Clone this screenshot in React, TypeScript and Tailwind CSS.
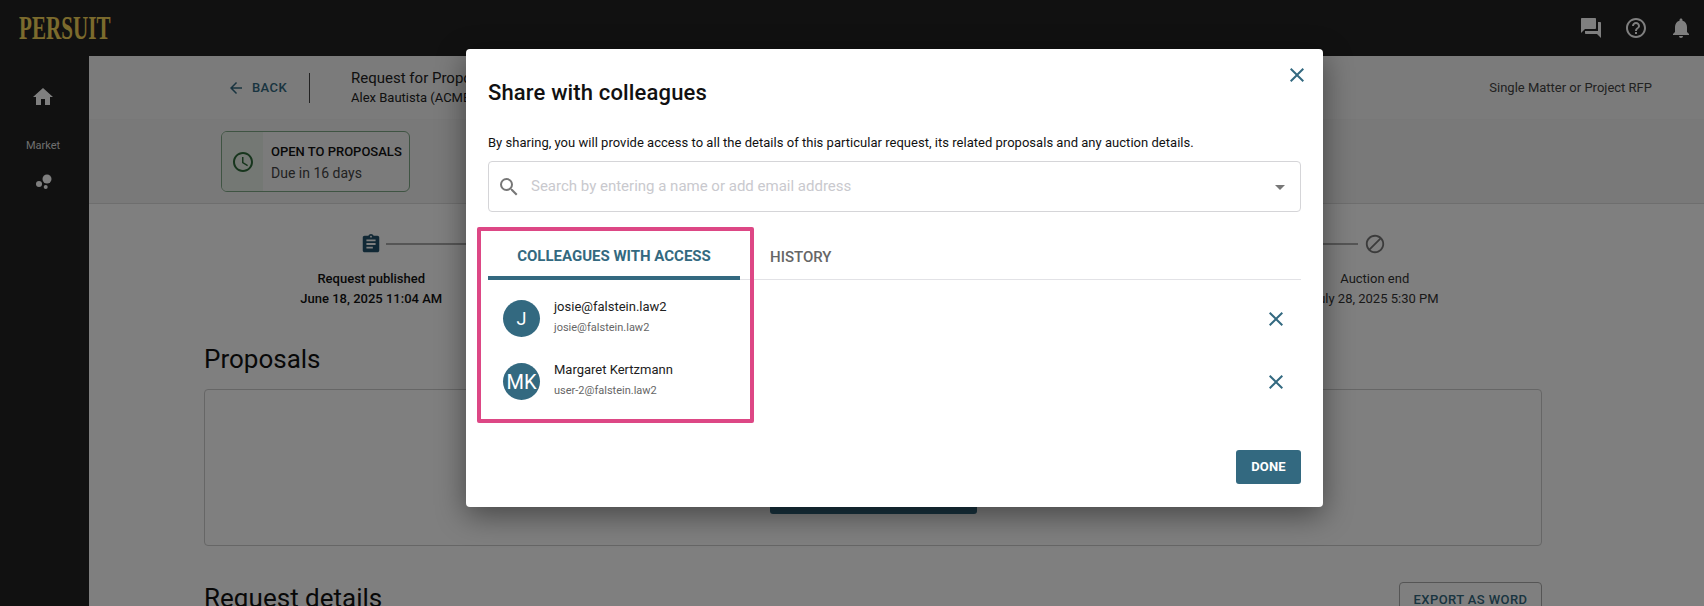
import React from "react";
import { MdHome, MdQuestionAnswer, MdHelpOutline, MdNotifications, MdArrowBack, MdAccessTime, MdAssignment, MdBlock, MdClose, MdSearch, MdArrowDropDown } from "react-icons/md";

const font = { fontFamily: "Roboto, 'Liberation Sans', sans-serif" };

function Person({ initials, name, email, big }: { initials: string; name: string; email: string; big?: boolean }) {
  return (
    <div className="flex h-[63px] items-center pl-[15px] pr-[13px]">
      <div className={`flex h-[37px] w-[37px] items-center justify-center rounded-full bg-[#336980] text-white ${big ? "text-[20px]" : "text-[18px]"}`}>{initials}</div>
      <div className="-mt-[2px] ml-[14px] flex-1">
        <div className="text-[13px] leading-[20px] text-[#212121]">{name}</div>
        <div className="mt-[1px] text-[11px] leading-[20px] text-[#666]">{email}</div>
      </div>
      <MdClose className="text-[#336980]" size={24} />
    </div>
  );
}

export default function App() {
  return (
    <div className="relative h-[606px] w-[1704px] overflow-hidden bg-white" style={font}>
      <header className="flex h-[56px] items-center justify-between bg-[#222] pl-[19px] pr-[11px]">
        <div className="origin-left scale-x-[0.64] text-[33px] font-bold leading-none text-[#f7d65a]" style={{ fontFamily: "'Liberation Serif', serif" }}>PERSUIT</div>
        <div className="flex items-center gap-[21px] text-[#fff]">
          <MdQuestionAnswer size={24} />
          <MdHelpOutline size={24} />
          <MdNotifications size={24} />
        </div>
      </header>
      <div className="flex h-[550px]">
        <aside className="flex w-[89px] shrink-0 flex-col items-center bg-[#222] pr-[3px] text-white">
          <MdHome size={24} className="mt-[29px]" />
          <div className="mt-[29px] text-[11px] leading-[16px] text-[#ddd]">Market</div>
          <svg className="mt-[16px]" width="24" height="24" viewBox="0 0 24 24" fill="#fff">
            <circle cx="16" cy="9" r="4.5" />
            <circle cx="8" cy="14" r="3" />
            <circle cx="14.7" cy="17" r="2" />
          </svg>
        </aside>
        <main className="min-w-0 flex-1">
          <div className="flex h-[64px] items-center border-b border-[#f0f0f0] bg-[#f6f6f6] pl-[138px] pr-[52px]">
            <MdArrowBack size={18} className="text-[#336980]" />
            <span className="ml-[7px] text-[13px] font-medium tracking-[0.4px] text-[#336980]">BACK</span>
            <div className="ml-[22px] h-[30px] w-px bg-[#444]" />
            <div className="ml-[41px]">
              <div className="text-[15px] leading-[20px] text-[#222]">Request for Proposal</div>
              <div className="text-[13px] leading-[20px] text-[#222]">Alex Bautista (ACME)</div>
            </div>
            <div className="ml-auto text-[13px] text-[#444]">Single Matter or Project RFP</div>
          </div>
          <div className="flex h-[84px] items-center border-b border-[#ddd] bg-[#f2f2f2] pl-[132px]">
            <div className="flex h-[61px] w-[189px] overflow-hidden rounded-[6px] border border-[#7fa886] bg-[#f7f7f7]">
              <div className="flex w-[41px] items-center justify-center bg-[#e8f1e8]">
                <MdAccessTime size={24} className="text-[#2f6b3a]" />
              </div>
              <div className="pl-[8px] pt-[10px]">
                <div className="text-[13px] font-medium leading-[20px] text-[#111]">OPEN TO PROPOSALS</div>
                <div className="mt-[1px] text-[14px] leading-[20px] text-[#444]">Due in 16 days</div>
              </div>
            </div>
          </div>
          <div className="pl-[115px] pr-[162px] pt-[29px]">
            <div className="flex items-center px-[167px]">
              <MdAssignment size={22} className="-ml-[11px] text-[#23516a]" />
              <div className="ml-[4px] mr-[6px] h-[2px] flex-1 bg-[#aaa]" />
              <MdBlock size={22} className="-mr-[11px] text-[#777]" />
            </div>
            <div className="mt-[14px] grid grid-cols-4 text-center text-[13px] leading-[20px]">
              <div className="font-medium text-[#111]">Request published<br />June 18, 2025 11:04 AM</div>
              <div />
              <div />
              <div className="text-[#333]">Auction end<br />July 28, 2025 5:30 PM</div>
            </div>
            <h2 className="mt-[34px] text-[26px] leading-[32px] text-[#111]">Proposals</h2>
            <div className="mt-[14px] flex h-[157px] items-end justify-center rounded-[4px] border border-[#ccc] pb-[31px]">
              <div className="h-[40px] w-[207px] rounded-[3px] bg-[#336980]" />
            </div>
            <div className="mt-[36px] flex items-start justify-between">
              <h2 className="text-[26px] leading-[32px] text-[#111]">Request details</h2>
              <div className="flex h-[36px] w-[143px] items-center justify-center rounded-[4px] border border-[#aaa] text-[13px] font-medium tracking-[0.4px] text-[#336980]">EXPORT AS WORD</div>
            </div>
          </div>
        </main>
      </div>

      <div className="absolute inset-0 bg-black/50" />

      <div className="absolute left-[466px] top-[49px] h-[458px] w-[857px] rounded-[4px] bg-white px-[22px] shadow-[0_8px_30px_rgba(0,0,0,0.45)]">
        <div className="flex h-[89px] items-start justify-between">
          <h1 className="mt-[30px] text-[22px] font-medium leading-[28px] tracking-[0.15px] text-[#111]">Share with colleagues</h1>
          <MdClose size={24} className="-mr-[8px] mt-[14px] text-[#336980]" />
        </div>
        <p className="text-[13px] leading-[10px] tracking-[0.025px] text-[#111]">By sharing, you will provide access to all the details of this particular request, its related proposals and any auction details.</p>
        <div className="mt-[13px] flex h-[51px] items-center rounded-[4px] border border-[#d5d5d8] pl-[8px] pr-[8px]">
          <MdSearch size={24} className="text-[#777]" />
          <span className="ml-[10px] flex-1 text-[15px] text-[#c9c9ce]">Search by entering a name or add email address</span>
          <MdArrowDropDown size={24} className="text-[#777]" />
        </div>
        <div className="mt-[18px] flex h-[50px] border-b border-[#e2e2e6]">
          <div className="-mb-px flex w-[252px] items-center justify-center border-b-[4px] border-[#336980] pt-[7px] text-[15px] font-bold text-[#336980]">COLLEAGUES WITH ACCESS</div>
          <div className="flex items-center pl-[30px] pt-[6px] text-[15px] font-medium text-[#666]">HISTORY</div>
        </div>
        <div className="pt-[7px]">
          <Person initials="J" name="josie@falstein.law2" email="josie@falstein.law2" />
          <Person initials="MK" name="Margaret Kertzmann" email="user-2@falstein.law2" big />
        </div>
        <div className="mt-[37px] flex justify-end">
          <div className="flex h-[34px] w-[65px] items-center justify-center rounded-[3px] bg-[#336980] text-[13px] font-bold tracking-[0.2px] text-white">DONE</div>
        </div>
      </div>

      <div className="absolute left-[477px] top-[227px] h-[196px] w-[277px] rounded-[2px] border-[4px] border-[#dd4785]" />
    </div>
  );
}
